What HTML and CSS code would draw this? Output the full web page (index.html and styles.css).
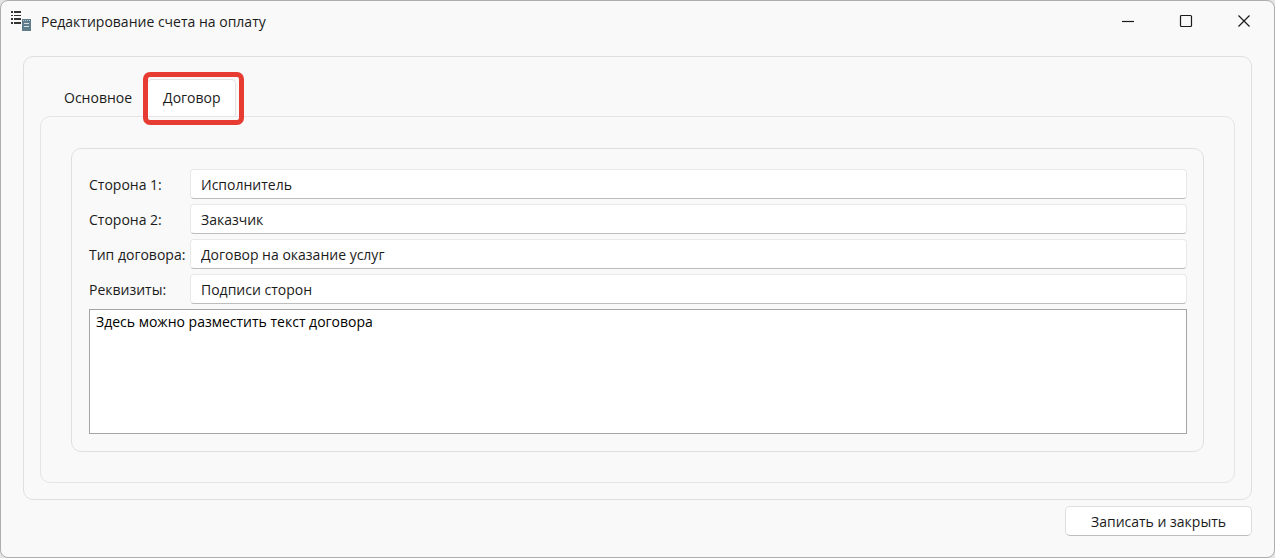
FILE: index.html
```html
<!DOCTYPE html>
<html lang="ru">

<head>
    <meta charset="UTF-8">
    <title>Редактирование счета на оплату</title>

    <link rel="stylesheet" href="styles.css">
</head>

<body>
    <div class="window">
        <header>
            <svg class="app-icon" width="22" height="22" viewBox="0 0 22 22">
                <g fill="#333">
                    <rect x="1" y="1" width="2" height="2" />
                    <rect x="4" y="1" width="7" height="2" />
                    <rect x="1" y="5" width="2" height="1" />
                    <rect x="4" y="5" width="7" height="1" />
                    <rect x="1" y="8" width="2" height="2" />
                    <rect x="4" y="8" width="7" height="2" />
                    <rect x="1" y="12" width="2" height="2" />
                    <rect x="4" y="12" width="7" height="2" />
                </g>
                <rect x="12" y="9" width="9" height="12" fill="#607d8b" />
                <path d="M13 10.5h7" stroke="#b5c3ca" stroke-dasharray="1 1" />
                <path d="M14 13.5h5M14 16.5h5" stroke="#d5dee2" />
            </svg>
            <h1>Редактирование счета на оплату</h1>
            <div class="window-buttons">
                <button type="button" aria-label="Свернуть">
                    <svg width="14" height="14" viewBox="0 0 14 14">
                        <path d="M1 7.5h12" />
                    </svg>
                </button>
                <button type="button" aria-label="Развернуть">
                    <svg width="14" height="14" viewBox="0 0 14 14">
                        <rect x="1.5" y="1.5" width="11" height="11" rx="1" />
                    </svg>
                </button>
                <button type="button" aria-label="Закрыть">
                    <svg width="14" height="14" viewBox="0 0 14 14">
                        <path d="M1.5 1.5l11 11M12.5 1.5l-11 11" />
                    </svg>
                </button>
            </div>
        </header>

        <main>
            <form>
                <div class="frame">
                    <div class="tabs" role="tablist">
                        <button type="button" class="tab" role="tab" aria-selected="false">Основное</button>
                        <button type="button" class="tab active" role="tab" aria-selected="true">Договор</button>
                    </div>
                    <div class="tab-panel" role="tabpanel">
                        <div class="group">
                            <label for="side1">Сторона 1:</label>
                            <input type="text" id="side1" value="Исполнитель">
                            <label for="side2">Сторона 2:</label>
                            <input type="text" id="side2" value="Заказчик">
                            <label for="type">Тип договора:</label>
                            <input type="text" id="type" value="Договор на оказание услуг">
                            <label for="details">Реквизиты:</label>
                            <input type="text" id="details" value="Подписи сторон">
                            <textarea aria-label="Текст договора">Здесь можно разместить текст договора</textarea>
                        </div>
                    </div>
                </div>
                <button type="submit" class="save">Записать и закрыть</button>
            </form>
        </main>
    </div>
</body>

</html>
```

FILE: styles.css
```css
* {
    padding: 0;
    margin: 0;
    box-sizing: border-box;
    font-family: "Open Sans", "Noto Sans", sans-serif;
}

body {
    background-color: #e4e4e4;
    font-size: 14px;
    color: #1b1b1b;
}

button,
input,
textarea {
    font-size: 14px;
    color: #1b1b1b;
}

.window {
    background-color: #f9f9f9;
    border: 1px solid #adadad;
    border-radius: 8px;
}

header {
    display: flex;
    align-items: center;
    height: 40px;
    padding: 0 1px 0 9px;
}

.app-icon {
    margin-right: 9px;
}

h1 {
    flex: 1;
    font-size: 14px;
    font-weight: normal;
}

.window-buttons {
    display: flex;
}

.window-buttons button {
    display: flex;
    align-items: center;
    justify-content: center;
    width: 58px;
    height: 38px;
    border: none;
    background: none;
}

.window-buttons svg {
    fill: none;
    stroke: #1b1b1b;
    stroke-width: 1.2;
}

main {
    padding: 15px 22px 21px;
}

form {
    display: flex;
    flex-direction: column;
    gap: 6px;
}

.frame {
    padding: 22px 16px 16px;
    border: 1px solid #e0e0e0;
    border-radius: 10px;
}

.tabs {
    display: flex;
    padding-left: 8px;
}

.tab {
    height: 37px;
    padding: 0 14px 2px 15px;
    border: 1px solid transparent;
    border-bottom: none;
    background: none;
}

.active {
    position: relative;
    border-color: #e3e3e3;
    border-radius: 5px 5px 0 0;
    background-color: #fff;
}

/* red highlight around the current tab */
.active::after {
    content: "";
    position: absolute;
    top: -8px;
    right: -9px;
    bottom: -9px;
    left: -5px;
    border: 5px solid #e63c31;
    border-radius: 7px;
}

.tab-panel {
    padding: 31px 30px 30px;
    border: 1px solid #e5e5e5;
    border-radius: 10px;
}

.group {
    display: grid;
    grid-template-columns: 101px 1fr;
    row-gap: 5px;
    align-items: center;
    padding: 20px 16px 17px 17px;
    border: 1px solid #e0e0e0;
    border-radius: 10px;
}

label {
    white-space: nowrap;
}

input {
    width: 100%;
    height: 30px;
    padding: 0 10px;
    border: 1px solid #e8e8e8;
    border-bottom-color: #bdbdbd;
    border-radius: 4px;
    background-color: #fff;
}

textarea {
    display: block;
    grid-column: 1 / 3;
    width: 100%;
    height: 125px;
    padding: 2px 6px;
    border: 1px solid #a5a5a5;
    background-color: #fff;
    color: #000;
    resize: none;
}

.save {
    align-self: flex-end;
    height: 30px;
    padding: 0 25px;
    border: 1px solid #dedede;
    border-bottom-color: #bdbdbd;
    border-radius: 5px;
    background-color: #fff;
}
```
